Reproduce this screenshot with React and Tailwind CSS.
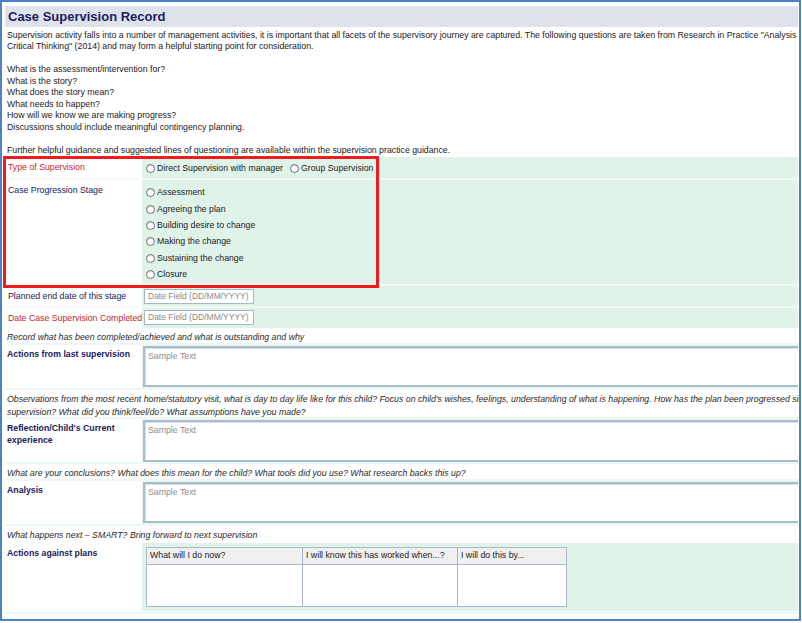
import React from "react";

function Radio({ label }) {
  return (
    <div className="flex items-center h-[16.4px]">
      <span className="w-[9px] h-[9px] rounded-full border border-[#6f6f6f] bg-white shrink-0 mr-[2px] shadow-[inset_0_1px_1px_rgba(0,0,0,0.15)]" />
      <span>{label}</span>
    </div>
  );
}

function DateInput() {
  return (
    <div className="w-[110px] h-[15px] border border-[#a6b6c9] bg-white flex items-center pl-[3px] text-[#8a8a8a] text-[8.5px]">
      Date Field (DD/MM/YYYY)
    </div>
  );
}

function TextArea({ h }) {
  return (
    <div
      className="w-[700px] border-2 border-[#a9bccd] bg-white pl-[3px] pt-[2px] text-[#8c8c8c] text-[8.75px] shadow-[inset_1px_1px_0_#d6e0ea]"
      style={{ height: h }}
    >
      Sample Text
    </div>
  );
}

export default function App() {
  return (
    <div className="w-[802px] h-[623px] bg-white overflow-hidden font-['Liberation_Sans',Arial,sans-serif] text-[8.75px] text-[#1a1a1a]">
      <div className="w-[801px] h-[621px] border-2 border-[#4f81c7] relative overflow-hidden pt-[4px] pl-[3px] pr-[1px]">
        {/* Title */}
        <div className="h-[21px] bg-[#dee3eb] flex items-center pl-[3px]">
          <span className="font-bold text-[13px] text-[#1b205c] leading-none">Case Supervision Record</span>
        </div>

        {/* Intro */}
        <div className="pl-[2px] pt-[2.5px] leading-[11.5px] whitespace-nowrap">
          <div>
            Supervision activity falls into a number of management activities, it is important that all facets of the supervisory journey are captured. The following questions are taken from Research in Practice "Analysis and Critical
          </div>
          <div>Critical Thinking" (2014) and may form a helpful starting point for consideration.</div>
          <div className="h-[11.5px]" />
          <div>What is the assessment/intervention for?</div>
          <div>What is the story?</div>
          <div>What does the story mean?</div>
          <div>What needs to happen?</div>
          <div>How will we know we are making progress?</div>
          <div>Discussions should include meaningful contingency planning.</div>
          <div className="h-[11.5px]" />
          <div>Further helpful guidance and suggested lines of questioning are available within the supervision practice guidance.</div>
        </div>

        {/* Form */}
        <div className="mt-[1px] flex flex-col">
          {/* Type of supervision */}
          <div className="flex h-[21px]">
            <div className="w-[137px] shrink-0 bg-white pl-[3px] pt-[4px] text-[#c1272d]">Type of Supervision</div>
            <div className="flex-1 bg-[#e0f3e9] pl-[4px] pt-[3px] flex gap-[7px]">
              <Radio label="Direct Supervision with manager" />
              <Radio label="Group Supervision" />
            </div>
          </div>
          <div className="h-[2px] bg-[#f2faf6]" />
          {/* Case Progression */}
          <div className="flex h-[104px]">
            <div className="w-[137px] shrink-0 bg-white pl-[3px] pt-[4px] text-[#1b205c]">Case Progression Stage</div>
            <div className="flex-1 bg-[#e0f3e9] pl-[4px] pt-[4.5px] flex flex-col">
              <Radio label="Assessment" />
              <Radio label="Agreeing the plan" />
              <Radio label="Building desire to change" />
              <Radio label="Making the change" />
              <Radio label="Sustaining the change" />
              <Radio label="Closure" />
            </div>
          </div>
          <div className="h-[2px] bg-[#f2faf6]" />
          {/* Planned end date */}
          <div className="flex h-[20px]">
            <div className="w-[137px] shrink-0 bg-white pl-[3px] pt-[4px] text-[#1b205c]">Planned end date of this stage</div>
            <div className="flex-1 bg-[#e0f3e9] pl-[2px] pt-[2.5px]">
              <DateInput />
            </div>
          </div>
          <div className="h-[2px] bg-[#f2faf6]" />
          {/* Date completed */}
          <div className="flex h-[20px]">
            <div className="w-[137px] shrink-0 bg-white pl-[3px] pt-[4px] text-[#c1272d] whitespace-nowrap">Date Case Supervision Completed</div>
            <div className="flex-1 bg-[#e0f3e9] pl-[2px] pt-[2px]">
              <DateInput />
            </div>
          </div>

          {/* Record */}
          <div className="h-[17px] bg-white pl-[2px] pt-[3px] italic text-[#2a2a2a] whitespace-nowrap border-b-2 border-[#eef8f2]">
            Record what has been completed/achieved and what is outstanding and why
          </div>
          {/* Actions from last supervision */}
          <div className="flex h-[45px] border-b-2 border-[#eef8f2]">
            <div className="w-[137px] shrink-0 bg-white pl-[2px] pt-[3px] font-bold text-[#1b205c]">Actions from last supervision</div>
            <div className="flex-1 bg-[#eaf6ef] pl-[1px] pt-[1px] overflow-hidden">
              <TextArea h={41} />
            </div>
          </div>

          {/* Observations */}
          <div className="h-[29px] bg-white pl-[2px] pt-[3px] italic text-[#2a2a2a] whitespace-nowrap leading-[12.5px] border-b-2 border-[#eef8f2]">
            <div>
              Observations from the most recent home/statutory visit, what is day to day life like for this child? Focus on child's wishes, feelings, understanding of what is happening. How has the plan been progressed since last
            </div>
            <div>supervision? What did you think/feel/do? What assumptions have you made?</div>
          </div>
          {/* Reflection */}
          <div className="flex h-[45px] border-b-2 border-[#eef8f2]">
            <div className="w-[137px] shrink-0 bg-white pl-[2px] pt-[3px] font-bold text-[#1b205c] leading-[12px]">
              Reflection/Child's Current
              <br />
              experience
            </div>
            <div className="flex-1 bg-[#eaf6ef] pl-[1px] pt-[1px] overflow-hidden">
              <TextArea h={42} />
            </div>
          </div>

          {/* Conclusions */}
          <div className="h-[17px] bg-white pl-[2px] pt-[3px] italic text-[#2a2a2a] whitespace-nowrap border-b-2 border-[#eef8f2]">
            What are your conclusions? What does this mean for the child? What tools did you use? What research backs this up?
          </div>
          {/* Analysis */}
          <div className="flex h-[45px] border-b-2 border-[#eef8f2]">
            <div className="w-[137px] shrink-0 bg-white pl-[2px] pt-[3px] font-bold text-[#1b205c]">Analysis</div>
            <div className="flex-1 bg-[#eaf6ef] pl-[1px] pt-[1px] overflow-hidden">
              <TextArea h={41} />
            </div>
          </div>

          {/* SMART */}
          <div className="h-[17px] bg-white pl-[2px] pt-[3px] italic text-[#2a2a2a] whitespace-nowrap">
            What happens next – SMART? Bring forward to next supervision
          </div>
          {/* Actions against plans */}
          <div className="flex h-[68px]">
            <div className="w-[137px] shrink-0 bg-white pl-[2px] pt-[4px] font-bold text-[#1b205c]">Actions against plans</div>
            <div className="flex-1 bg-[#e0f3e9] pl-[4px] pt-[4px]">
              <div className="w-[421px] border border-[#a9b8ca] grid grid-cols-[156px_155px_1fr] bg-white">
                <div className="h-[17px] bg-[#f0f0f0] border-r border-b border-[#a9b8ca] pl-[3px] flex items-center">What will I do now?</div>
                <div className="h-[17px] bg-[#f0f0f0] border-r border-b border-[#a9b8ca] pl-[3px] flex items-center">I will know this has worked when...?</div>
                <div className="h-[17px] bg-[#f0f0f0] border-b border-[#a9b8ca] pl-[3px] flex items-center">I will do this by...</div>
                <div className="h-[41px] border-r border-[#a9b8ca]" />
                <div className="h-[41px] border-r border-[#a9b8ca]" />
                <div className="h-[41px]" />
              </div>
            </div>
          </div>
          <div className="h-[2px] mt-[1px] bg-[#eef8f2]" />
        </div>

        {/* Red annotation box */}
        <div className="absolute left-[1px] top-[153.5px] w-[376px] h-[132px] border-[3px] border-[#ee1c1c] pointer-events-none" />
      </div>
    </div>
  );
}
